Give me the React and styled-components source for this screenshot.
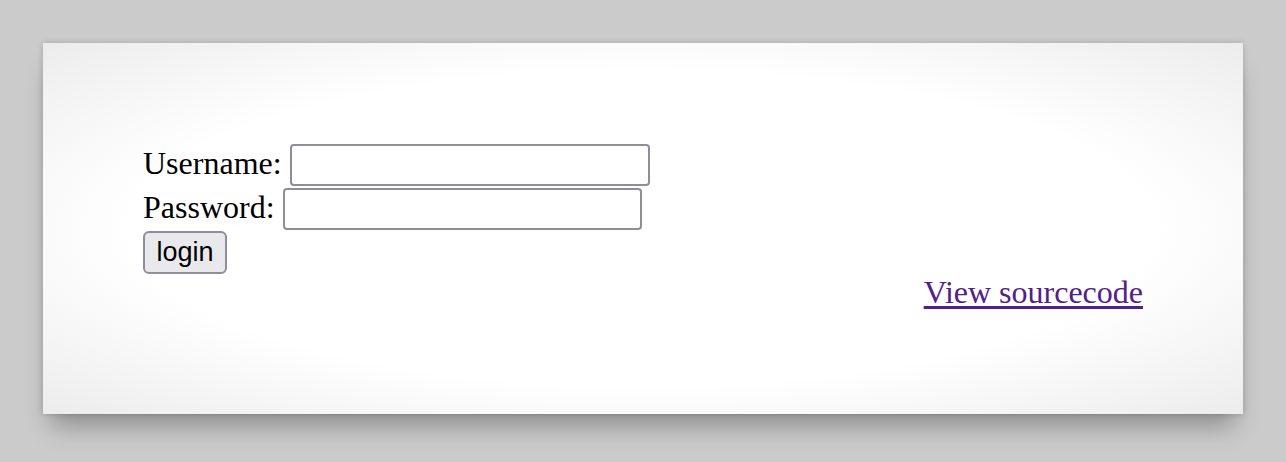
import React from "react";
import styled, { createGlobalStyle } from "styled-components";

const GlobalStyle = createGlobalStyle`
  html, body {
    margin: 0;
    padding: 0;
    background: #cbcbcb;
  }
  body {
    font-family: "Liberation Serif", "Times New Roman", serif;
  }
`;

const Page = styled.div`
  padding: 43px 0 50px;
  min-height: 462px;
  box-sizing: border-box;
`;

const Content = styled.div`
  width: 1000px;
  margin: 0 auto;
  padding: 100px;
  background: radial-gradient(ellipse at center, #ffffff 60%, #ececec 100%);
  box-shadow: 0 20px 24px -8px rgba(0, 0, 0, 0.3), 0 0 6px rgba(0, 0, 0, 0.18);
  font-size: 32px;
  color: #000;
`;

const LoginForm = styled.form`
  display: flex;
  flex-direction: column;
  align-items: flex-start;
`;

const FieldRow = styled.label`
  display: flex;
  align-items: flex-start;
  gap: 8px;
  height: 44px;
  line-height: 40px;
`;

const TextInput = styled.input`
  box-sizing: border-box;
  width: ${({ $width }) => $width || 360}px;
  height: 42px;
  margin: 1px 0 0;
  padding: 2px 6px;
  border: 2px solid #8f8d99;
  border-radius: 4px;
  background: #fff;
  font-size: 22px;
  font-family: "Liberation Sans", Arial, sans-serif;
`;

const SubmitButton = styled.button`
  box-sizing: border-box;
  width: 84px;
  height: 43px;
  margin: 0;
  padding: 0 8px;
  border: 2px solid #8f8d99;
  border-radius: 6px;
  background: #e9e9ed;
  color: #000;
  font-size: 27px;
  font-family: "Liberation Sans", Arial, sans-serif;
`;

const ViewSource = styled.div`
  text-align: right;
  line-height: 36px;
  padding-bottom: 4px;

  a {
    color: #52208a;
    text-decoration: underline;
    text-underline-offset: 3px;
  }
`;

const App = () => {
  return (
    <>
      <GlobalStyle />
      <Page>
        <Content>
          <LoginForm onSubmit={(e) => e.preventDefault()}>
            <FieldRow>
              Username: <TextInput name="username" />
            </FieldRow>
            <FieldRow>
              Password: <TextInput name="password" $width={359} />
            </FieldRow>
            <SubmitButton type="submit">login</SubmitButton>
          </LoginForm>
          <ViewSource>
            <a href="#">View sourcecode</a>
          </ViewSource>
        </Content>
      </Page>
    </>
  );
};

export default App;
